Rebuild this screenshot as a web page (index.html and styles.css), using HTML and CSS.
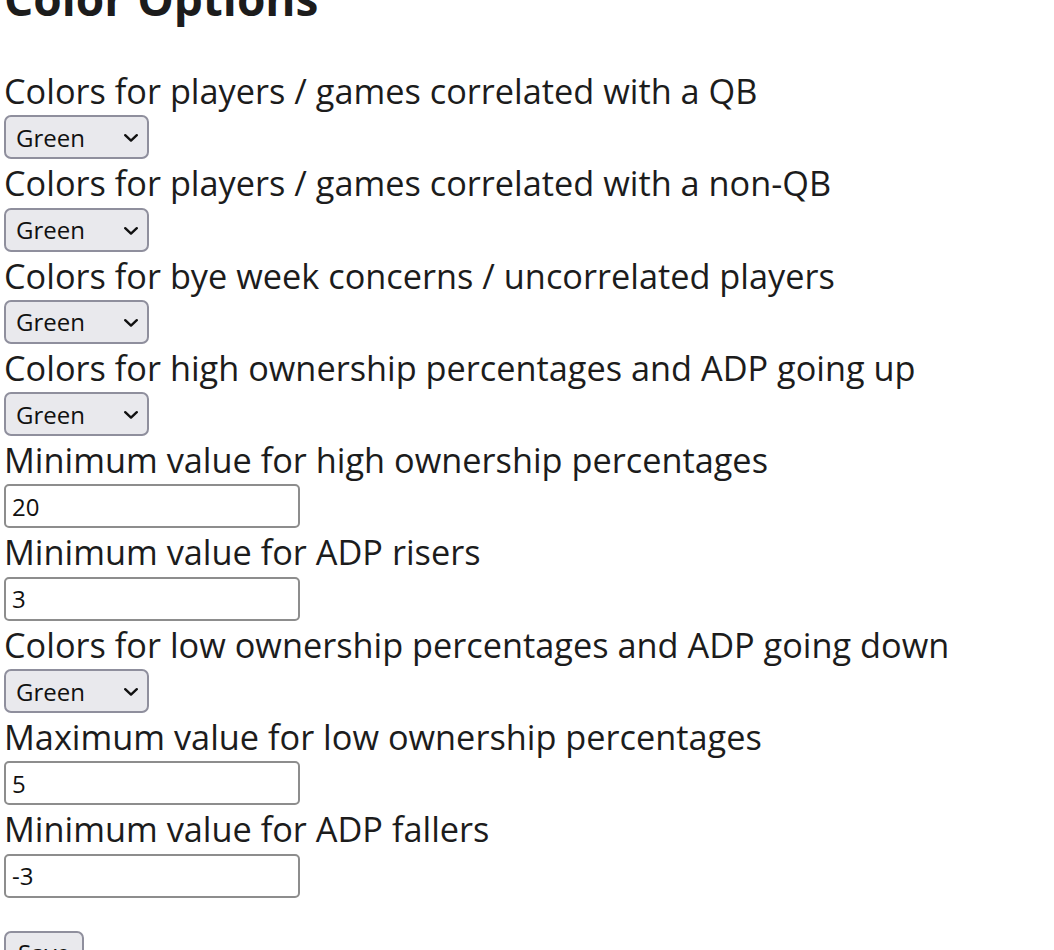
FILE: index.html
```html
<!DOCTYPE html>
<html lang="en">
  <head>
    <meta charset="UTF-8" />
    <meta name="viewport" content="width=device-width, initial-scale=1.0" />
    <title>Color Options</title>
    <link rel="stylesheet" href="styles.css">
  </head>
  <body>
    <div class="options">
      <h1 class="title">Color Options</h1>
      <form class="form">
        <label class="label" for="qb">Colors for players / games correlated with a QB</label>
        <span class="pick">
          <select id="qb" class="select"><option>Green</option><option>Red</option><option>Blue</option></select>
          <svg class="chev" width="14" height="8" viewBox="0 0 14 8"><path d="M1.2 1.2 L7 6.6 L12.8 1.2" fill="none" stroke="#111" stroke-width="2.4" stroke-linecap="round" stroke-linejoin="round"/></svg>
        </span>

        <label class="label" for="nonqb">Colors for players / games correlated with a non-QB</label>
        <span class="pick">
          <select id="nonqb" class="select"><option>Green</option><option>Red</option><option>Blue</option></select>
          <svg class="chev" width="14" height="8" viewBox="0 0 14 8"><path d="M1.2 1.2 L7 6.6 L12.8 1.2" fill="none" stroke="#111" stroke-width="2.4" stroke-linecap="round" stroke-linejoin="round"/></svg>
        </span>

        <label class="label" for="bye">Colors for bye week concerns / uncorrelated players</label>
        <span class="pick">
          <select id="bye" class="select"><option>Green</option><option>Red</option><option>Blue</option></select>
          <svg class="chev" width="14" height="8" viewBox="0 0 14 8"><path d="M1.2 1.2 L7 6.6 L12.8 1.2" fill="none" stroke="#111" stroke-width="2.4" stroke-linecap="round" stroke-linejoin="round"/></svg>
        </span>

        <label class="label" for="high">Colors for high ownership percentages and ADP going up</label>
        <span class="pick">
          <select id="high" class="select"><option>Green</option><option>Red</option><option>Blue</option></select>
          <svg class="chev" width="14" height="8" viewBox="0 0 14 8"><path d="M1.2 1.2 L7 6.6 L12.8 1.2" fill="none" stroke="#111" stroke-width="2.4" stroke-linecap="round" stroke-linejoin="round"/></svg>
        </span>

        <label class="label" for="highmin">Minimum value for high ownership percentages</label>
        <input id="highmin" class="field" type="text" value="20">

        <label class="label" for="risers">Minimum value for ADP risers</label>
        <input id="risers" class="field" type="text" value="3">

        <label class="label" for="low">Colors for low ownership percentages and ADP going down</label>
        <span class="pick">
          <select id="low" class="select"><option>Green</option><option>Red</option><option>Blue</option></select>
          <svg class="chev" width="14" height="8" viewBox="0 0 14 8"><path d="M1.2 1.2 L7 6.6 L12.8 1.2" fill="none" stroke="#111" stroke-width="2.4" stroke-linecap="round" stroke-linejoin="round"/></svg>
        </span>

        <label class="label" for="lowmax">Maximum value for low ownership percentages</label>
        <input id="lowmax" class="field" type="text" value="5">

        <label class="label" for="fallers">Minimum value for ADP fallers</label>
        <input id="fallers" class="field" type="text" value="-3">

        <button class="save" type="button">Save</button>
      </form>
    </div>
  </body>
</html>
```

FILE: styles.css
```css
* {
  margin: 0;
  padding: 0;
  box-sizing: border-box;
}
body {
  background: #fff;
  color: #1c1c1c;
  font-family: "Open Sans", "Noto Sans", sans-serif;
  overflow: hidden;
}
.options {
  padding-left: 4px;
}
.title {
  font-size: 46px;
  font-weight: 700;
  line-height: 50px;
  margin-top: -27px;
  margin-bottom: 44px;
}
.form {
  display: flex;
  flex-direction: column;
  align-items: flex-start;
}
.label {
  display: block;
  font-size: 34.3px;
  line-height: 48.3px;
  white-space: nowrap;
}
.pick {
  position: relative;
  display: block;
}
.select {
  appearance: none;
  -webkit-appearance: none;
  display: block;
  width: 145px;
  height: 44px;
  padding: 0 0 0 10px;
  font-family: "Open Sans", "Noto Sans", sans-serif;
  font-size: 24px;
  color: #111;
  background: #e9e9ed;
  border: 2px solid #8f8f9d;
  border-radius: 7px;
}
.chev {
  position: absolute;
  left: 120px;
  top: 19px;
  pointer-events: none;
}
.field {
  display: block;
  width: 296px;
  height: 44px;
  padding: 0 6px;
  font-family: "Open Sans", "Noto Sans", sans-serif;
  font-size: 24px;
  color: #111;
  background: #fff;
  border: 2px solid #8d8d8d;
  border-radius: 5px;
}
.save {
  margin-top: 33px;
  width: 80px;
  height: 44px;
  padding: 0 12px;
  font-family: "Open Sans", "Noto Sans", sans-serif;
  font-size: 24px;
  color: #111;
  text-align: left;
  background: #e9e9ed;
  border: 2px solid #8f8f9d;
  border-radius: 7px;
}
```
